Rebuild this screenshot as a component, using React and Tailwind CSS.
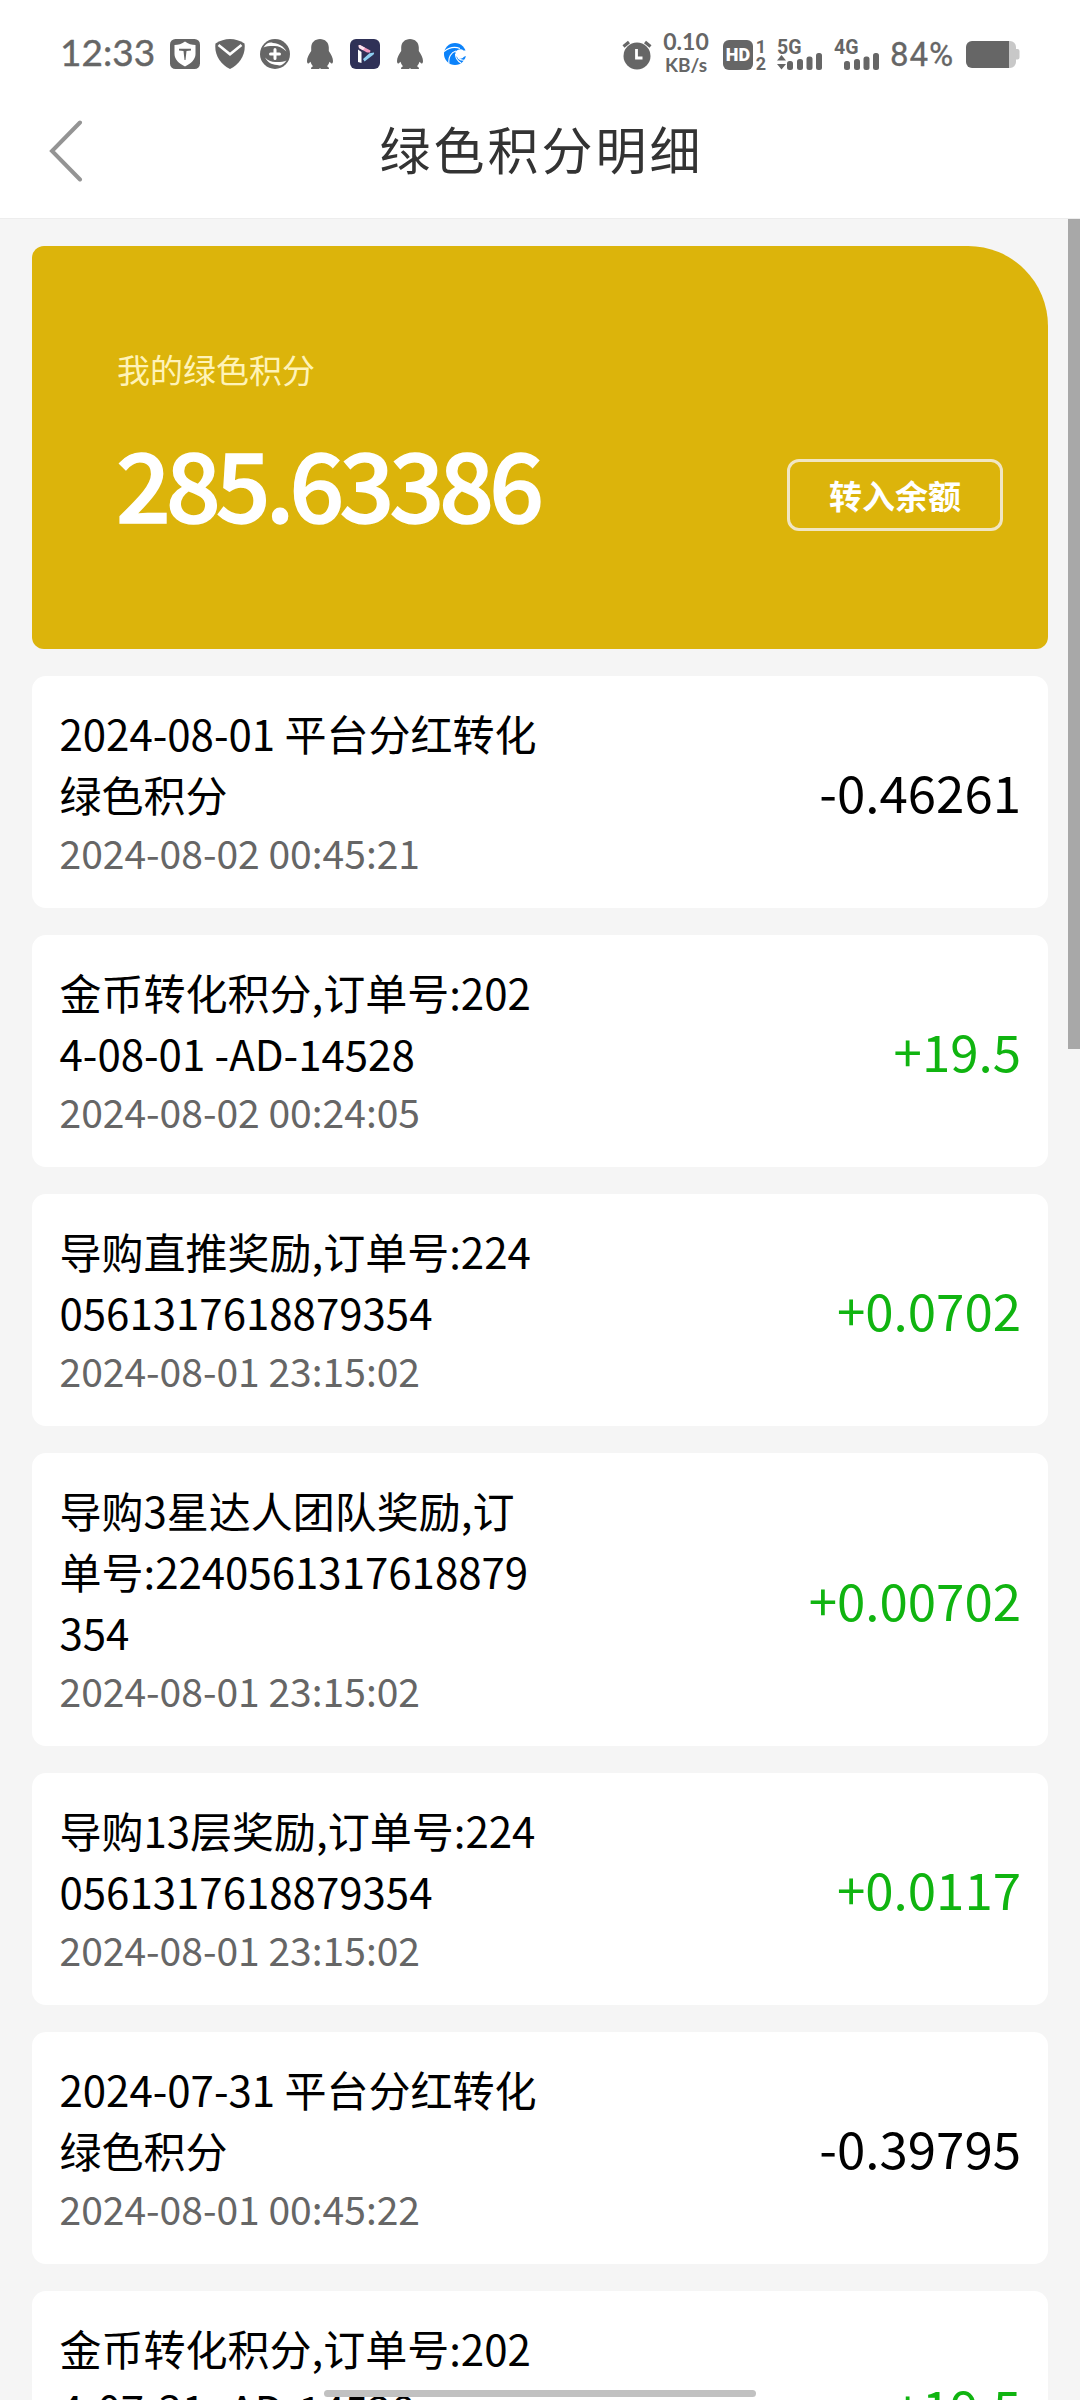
const CARD_GAP = "gap-[27px]";

const RECORDS = [
  { title: "2024-08-01 平台分红转化绿色积分", time: "2024-08-02 00:45:21", amount: "-0.46261" },
  { title: "金币转化积分,订单号:2024-08-01 -AD-14528", time: "2024-08-02 00:24:05", amount: "+19.5" },
  { title: "导购直推奖励,订单号:2240561317618879354", time: "2024-08-01 23:15:02", amount: "+0.0702" },
  { title: "导购3星达人团队奖励,订单号:2240561317618879354", time: "2024-08-01 23:15:02", amount: "+0.00702" },
  { title: "导购13层奖励,订单号:2240561317618879354", time: "2024-08-01 23:15:02", amount: "+0.0117" },
  { title: "2024-07-31 平台分红转化绿色积分", time: "2024-08-01 00:45:22", amount: "-0.39795" },
  { title: "金币转化积分,订单号:2024-07-31 -AD-14528", time: "2024-08-01 00:24:05", amount: "+19.5" },
];

function ShieldSquareIcon() {
  return (
    <svg width="30" height="30" viewBox="0 0 30 30">
      <rect width="30" height="30" rx="5.5" fill="#666" />
      <path d="M15 2.5C12 5 8 6 4.5 6V15c0 5.500 4.500 9.500 10.500 12.500 6-3 10.500-7 10.500-12.500V6C22 6 18 5 15 2.500z" fill="#fff" />
      <path d="M9 9.800h12v1.600l-4.500.6-1 9h-1l-1-9-4.500-.6z" fill="#666" />
    </svg>
  );
}

function CheckShieldIcon() {
  return (
    <svg width="30" height="30" viewBox="0 0 30 30">
      <path d="M15 0c5 0 10 1.500 14.500 4.500C31 15 25 25 15 30 5 25-1 15 .5 4.500 5 1.500 10 0 15 0z" fill="#666" />
      <path d="M3.500 6l11.500 9.300L26.500 6" fill="none" stroke="#fff" strokeWidth="2.600" />
    </svg>
  );
}

function SwirlPlusIcon() {
  return (
    <svg width="30" height="30" viewBox="0 0 30 30">
      <circle cx="15" cy="15" r="15" fill="#666" />
      <path d="M3.500 8.500C7 3.500 10 3 13 4c6 .5 10.500 3 13.500 8.500C22 8 17 6.500 13 7 9 7 6 7 3.500 8.500z" fill="#fff" />
      <path d="M26.500 21.500c-3.500 5-6.500 5.500-9.500 4.500-6-.5-9-2.500-12-7.500 4 4 8 5 12 4.500 4 0 7-.2 9.500-1.500z" fill="#fff" />
      <path d="M15 10.500v9M10.500 15h9" stroke="#fff" strokeWidth="3" strokeLinecap="round" />
    </svg>
  );
}

function PenguinIcon() {
  return (
    <svg width="26" height="30" viewBox="0 0 26 30">
      <path d="M13 0C8 0 4.200 3.500 4.200 8.500v3.500C2 15 0 19 0 22c0 1.500.5 2.500 1 2.500.8 0 1.700-1 2.500-1.800.5 1.900 1.400 3.300 2.500 4.500-1.200.5-2 1.200-2 2.800h8l1-1 1 1h8c0-1.600-.8-2.300-2-2.800 1.100-1.200 2-2.600 2.500-4.500.8.800 1.700 1.800 2.500 1.800.5 0 1-1 1-2.500 0-3-2-7-4.200-10V8.500C21.800 3.500 18 0 13 0z" fill="#666" />
    </svg>
  );
}

function PlayAppIcon() {
  return (
    <svg width="30" height="30" viewBox="0 0 30 30">
      <rect width="30" height="30" rx="6" fill="#2f3157" />
      <path d="M8 10.500l3.500 2.500v11L8 23z" fill="#fff" />
      <path d="M8.500 6.500c.5-.8 1.300-.7 2-.3l10 5.300-.5 2H17L9 9z" fill="#f29ac0" />
      <path d="M8.500 6.500c.5-.8 1.300-.7 2-.3l4.500 2.500-2 2.500L9 9z" fill="#fbe3ee" />
      <path d="M24 13.500c.3 1-.2 1.900-1 2.500l-8.500 6.500-1.500-2.500 6.500-5.700z" fill="#8fd0f2" />
    </svg>
  );
}

function BlueSwirlIcon() {
  return (
    <svg width="22" height="22" viewBox="0 0 22 22">
      <circle cx="11" cy="11" r="11" fill="#0b82fa" />
      <path d="M11.500 9c2-3 6-3.500 8-1.500l2.500 0v5.500l-2 .8c-1.500 2.200-5 2.400-6.800.7-1.700-1.500-2-3.500-1.700-5.500z" fill="#fff" />
      <path d="M0 8.500C5 4.500 11 3.500 16 5.500M5 20.500c-1-6 2-11 7-12.500M11.500 11c0 4 2 7 5.500 9M14 15c2 2 4.500 2.500 7 2" fill="none" stroke="#fff" strokeWidth="1.100" />
    </svg>
  );
}

function AlarmIcon() {
  return (
    <svg width="30" height="30" viewBox="0 0 30 30">
      <circle cx="15" cy="16" r="13.500" fill="#666" />
      <path d="M1.500 6.500L7 2M28.500 6.500L23 2" stroke="#666" strokeWidth="3.200" />
      <path d="M14.500 9v9h6" fill="none" stroke="#fff" strokeWidth="2.800" />
    </svg>
  );
}

function Signal({ label, arrows }) {
  return (
    <svg width="46" height="38" viewBox="0 -6 46 38" fill="#666">
      <text x="0" y="14.500" fontSize="19.500" fontWeight="700" fontFamily="Roboto, sans-serif">{label}</text>
      {arrows && <path d="M0 21.500l4.500-5.500 4.500 5.500zM0 25h9l-4.500 5.500z" />}
      <rect x="10" y="22" width="6" height="9" rx="2.500" />
      <rect x="20" y="20" width="6" height="11" rx="2.500" />
      <rect x="29.500" y="17.500" width="6" height="13.500" rx="2.500" />
      <rect x="39" y="14" width="6" height="17" rx="2.500" />
    </svg>
  );
}

function BatteryIcon() {
  return (
    <svg width="54" height="27" viewBox="0 0 54 27">
      <path d="M42 0h2a6 6 0 016 6v2h1.500a2 2 0 012 2v6.500a2 2 0 01-2 2H50V21a6 6 0 01-6 6h-2z" fill="#c8c8c8" />
      <path d="M43 0v27H6a6 6 0 01-6-6V6a6 6 0 016-6z" fill="#666" />
    </svg>
  );
}

function StatusBar() {
  return (
    <div className="flex h-[110px] items-start justify-between pl-[60px] pr-[60px] pt-[31px] font-['Lato',sans-serif] text-[#666]">
      <div className="flex h-[46px] items-center">
        <span className="w-[110px] whitespace-nowrap pb-[5px] text-[37px] leading-[42px] [-webkit-text-stroke:0.4px_#666]">12:33</span>
        <div className="flex items-center gap-[15px]">
          <ShieldSquareIcon />
          <CheckShieldIcon />
          <SwirlPlusIcon />
          <div className="flex w-[30px] justify-center"><PenguinIcon /></div>
          <PlayAppIcon />
          <div className="flex w-[30px] justify-center"><PenguinIcon /></div>
          <div className="flex w-[30px] justify-center"><BlueSwirlIcon /></div>
        </div>
      </div>
      <div className="flex h-[46px] items-center pt-px">
        <div className="ml-px"><AlarmIcon /></div>
        <div className="ml-[11px] flex w-[46px] flex-col items-center whitespace-nowrap pb-[3px] font-bold leading-[23px]">
          <span className="text-[23px]">0.10</span>
          <span className="text-[19px]">KB/s</span>
        </div>
        <div className="ml-[14px] flex h-[30px] w-[30px] items-center justify-center rounded-[6px] bg-[#666] font-['Roboto',sans-serif] text-[18px] font-black leading-[24px] text-white">HD</div>
        <div className="ml-[2px] flex w-[12px] flex-col items-center font-['Roboto',sans-serif] text-[18px] font-bold leading-[17px]">
          <span>1</span>
          <span>2</span>
        </div>
        <div className="ml-[10px] pb-[6px]"><Signal label="5G" arrows /></div>
        <div className="ml-[11px] pb-[6px]"><Signal label="4G" /></div>
        <span className="ml-[10px] w-[68px] whitespace-nowrap font-['Roboto',sans-serif] text-[33px] leading-[40px] tracking-[1px] [-webkit-text-stroke:0.3px_#666]">84%</span>
        <div className="ml-[8px]"><BatteryIcon /></div>
      </div>
    </div>
  );
}

function NavBar() {
  return (
    <div className="flex h-[109px] items-start border-b border-[#ededed] px-[49px]">
      <svg className="mt-[10px]" width="34" height="62" viewBox="0 0 34 62">
        <path d="M31 2.500L3 31l28 28.500" fill="none" stroke="#949494" strokeWidth="4" strokeLinecap="round" />
      </svg>
      <h1 className="mr-[34px] flex-1 pl-[3px] text-center text-[51px] leading-[76px] tracking-[3px] text-[#333]">绿色积分明细</h1>
    </div>
  );
}

function BalanceCard() {
  return (
    <div className="flex h-[403px] justify-between rounded-[12px] rounded-tr-[80px] bg-[#dcb40b] pl-[84px] pr-[45px]">
      <div>
        <p className="mt-[98px] pl-px text-[33px] leading-[50px] text-[#fff3b8]">我的绿色积分</p>
        <p className="mt-[18px] text-[96px] font-medium leading-[140px] tracking-[-4.800px] text-white [-webkit-text-stroke:1.500px_white]">285.63386</p>
      </div>
      <button className="mt-[213px] h-[72px] w-[216px] rounded-[12px] border-3 border-[#f1e6c3] text-[33px] font-bold leading-none text-white">
        转入余额
      </button>
    </div>
  );
}

function RecordCard({ record }) {
  const color = record.amount.startsWith("-") ? "text-black" : "text-[#10b410]";
  return (
    <div className="flex items-center justify-between rounded-[14px] bg-white px-[27px] pb-[28px] pt-[26px]">
      <div className="w-1/2">
        <p className="break-all pl-[0.500px] text-[42px] leading-[61px] text-black">{record.title}</p>
        <p className="whitespace-nowrap pl-[0.500px] text-[39px] leading-[56px] text-[#666]">{record.time}</p>
      </div>
      <span className={`pt-px text-[51px] leading-[75px] ${color}`}>{record.amount}</span>
    </div>
  );
}

export default function App() {
  return (
    <div className="relative h-[2400px] w-[1080px] overflow-hidden bg-[#f5f5f5] font-['Noto_Sans_CJK_SC',sans-serif]">
      <div className="bg-white">
        <StatusBar />
        <NavBar />
      </div>
      <div className={`flex flex-col px-[32px] pt-[27px] ${CARD_GAP}`}>
        <BalanceCard />
        {RECORDS.map((record, idx) => (
          <RecordCard key={idx} record={record} />
        ))}
      </div>
      {/* scroll thumb */}
      <div className="absolute right-0 top-[219px] h-[830px] w-[12px] bg-[#a8a8a8]" />
      {/* gesture bar */}
      <div className="absolute left-[324px] top-[2390px] h-[7px] w-[432px] rounded-full bg-[#c1c1c1]" />
    </div>
  );
}
